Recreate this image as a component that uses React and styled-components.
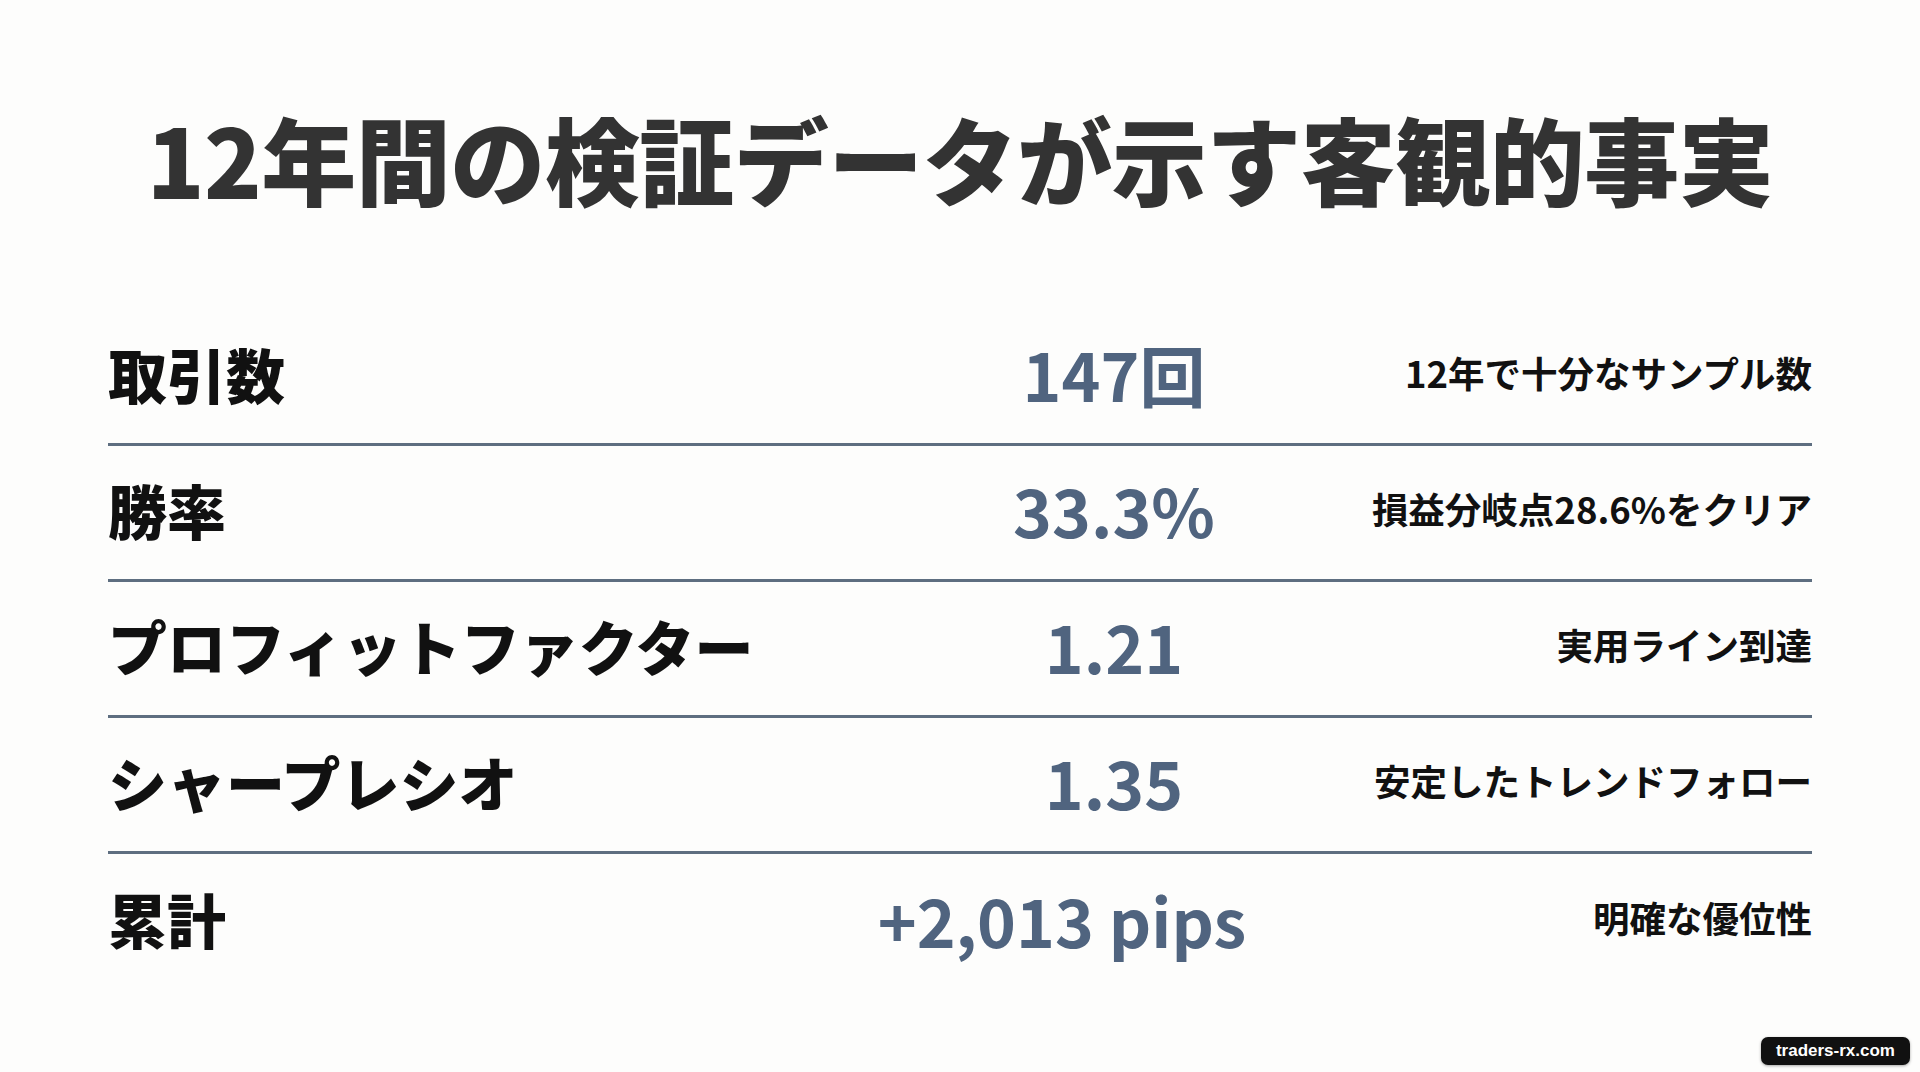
import React from 'react';
import styled, { createGlobalStyle } from 'styled-components';

const GlobalStyle = createGlobalStyle`
  html, body {
    margin: 0;
    padding: 0;
    background: #fdfdfc;
  }
  * {
    box-sizing: border-box;
  }
`;

const Slide = styled.main`
  position: relative;
  width: 100%;
  height: 1072px;
  overflow: hidden;
  background: #fdfdfc;
  font-family: "Noto Sans CJK JP", "Noto Sans", sans-serif;
  padding: 110px 108px 0;
`;

const Title = styled.h1`
  margin: 0;
  text-align: center;
  font-size: 95px;
  line-height: 1;
  font-weight: 900;
  color: #333333;
  letter-spacing: -0.5px;
`;

const Table = styled.div`
  margin-top: 105px;
  display: flex;
  flex-direction: column;
`;

const Row = styled.div`
  display: grid;
  grid-template-columns: 756px 500px 1fr;
  align-items: center;
  height: 136px;
  padding-bottom: 7px;
  border-bottom: ${p => (p.$last ? 'none' : '3px solid #5e6e80')};
`;

const Label = styled.div`
  font-size: 59px;
  font-weight: 900;
  color: #111111;
  line-height: 1;
  white-space: nowrap;
`;

const Value = styled.div`
  text-align: center;
  font-size: 66px;
  font-weight: 700;
  color: #50647f;
  line-height: 1;
  white-space: nowrap;
  margin-right: ${p => p.$nudge || 0}px;
`;

const Note = styled.div`
  text-align: right;
  font-size: 36.5px;
  font-weight: 700;
  color: #111111;
  line-height: 1;
  white-space: nowrap;
`;

const Badge = styled.div`
  position: absolute;
  right: 10px;
  bottom: 7px;
  background: #111111;
  color: #ffffff;
  font-family: "Liberation Sans", Arial, sans-serif;
  font-weight: 700;
  font-size: 17px;
  line-height: 1;
  padding: 5px 15px 6px;
  border-radius: 7px;
  box-shadow: 0 1px 3px rgba(0, 0, 0, 0.35);
`;

const stats = [
  { label: '取引数', value: '147回', note: '12年で十分なサンプル数' },
  { label: '勝率', value: '33.3%', note: '損益分岐点28.6%をクリア' },
  { label: 'プロフィットファクター', value: '1.21', note: '実用ライン到達' },
  { label: 'シャープレシオ', value: '1.35', note: '安定したトレンドフォロー' },
  { label: '累計', value: '+2,013 pips', note: '明確な優位性', nudge: 104 },
];

const App = () => (
  <>
    <GlobalStyle />
    <Slide>
      <Title>12年間の検証データが示す客観的事実</Title>
      <Table>
        {stats.map((s, i) => (
          <Row key={s.label} $last={i === stats.length - 1}>
            <Label>{s.label}</Label>
            <Value $nudge={s.nudge}>{s.value}</Value>
            <Note>{s.note}</Note>
          </Row>
        ))}
      </Table>
      <Badge>traders-rx.com</Badge>
    </Slide>
  </>
);

export default App;
